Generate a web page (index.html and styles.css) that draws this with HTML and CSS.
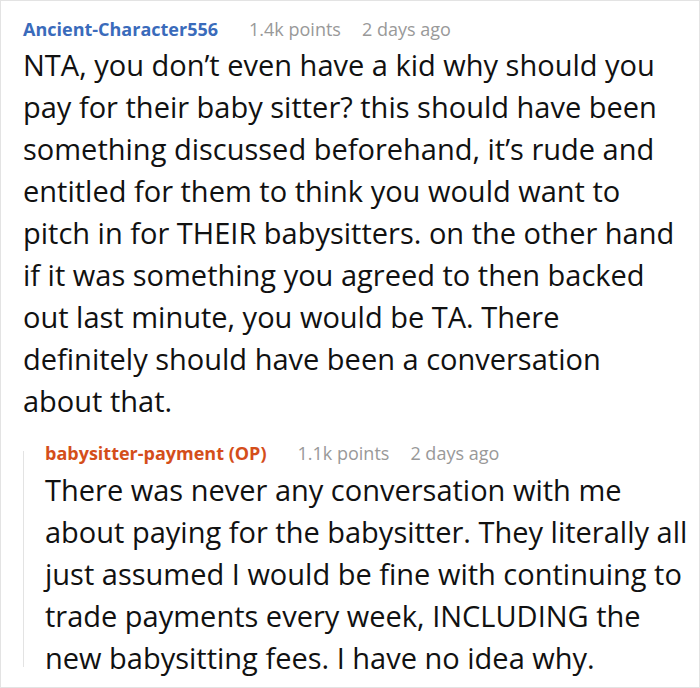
FILE: index.html
```html
<!DOCTYPE html>
<html lang="en">
<head>
<meta charset="utf-8">
<link rel="stylesheet" href="styles.css">
</head>
<body>
<div class="frame">
  <div class="comment">
    <div class="meta">
      <span class="user">Ancient-Character556</span>
      <span class="info">1.4k points</span>
      <span class="info">2 days ago</span>
    </div>
    <p class="text main-text">NTA, you don’t even have a kid why should you pay for their baby sitter? this should have been something discussed beforehand, it’s rude and entitled for them to think you would want to pitch in for THEIR babysitters. on the other hand if it was something you agreed to then backed out last minute, you would be TA. There definitely should have been a conversation about that.</p>
    <div class="reply">
      <div class="meta">
        <span class="user op">babysitter-payment (OP)</span>
        <span class="info">1.1k points</span>
        <span class="info">2 days ago</span>
      </div>
      <p class="text">There was never any conversation with me about paying for the babysitter. They literally all just assumed I would be fine with continuing to trade payments every week, INCLUDING the new babysitting fees. I have no idea why.</p>
    </div>
  </div>
</div>
</body>
</html>
```

FILE: styles.css
```css
html, body {
  margin: 0;
  padding: 0;
  background: #fff;
}
.frame {
  width: 700px;
  height: 688px;
  box-sizing: border-box;
  border: 1px solid #e3e3e3;
  padding: 14px 4px 0 22px;
  font-family: "Open Sans", "Noto Sans", sans-serif;
  color: #111;
}
.meta {
  display: flex;
  gap: 21px;
  font-size: 18px;
  line-height: 28px;
  margin-bottom: 1px;
}
.reply .meta {
  margin-bottom: 2px;
}
.user {
  font-weight: 700;
  color: #3a6bbb;
  margin-right: 10px;
}
.user.op {
  color: #d44e1a;
}
.info {
  color: #999;
}
.text {
  margin: 0;
  font-size: 29px;
  line-height: 42px;
}
.main-text {
  padding-right: 12px;
}
.reply {
  position: relative;
  margin-top: 17px;
  padding-left: 22px;
}
.reply::before {
  content: "";
  position: absolute;
  left: 0;
  top: 12px;
  bottom: 12px;
  border-left: 1px solid #e3e3e3;
}
```
